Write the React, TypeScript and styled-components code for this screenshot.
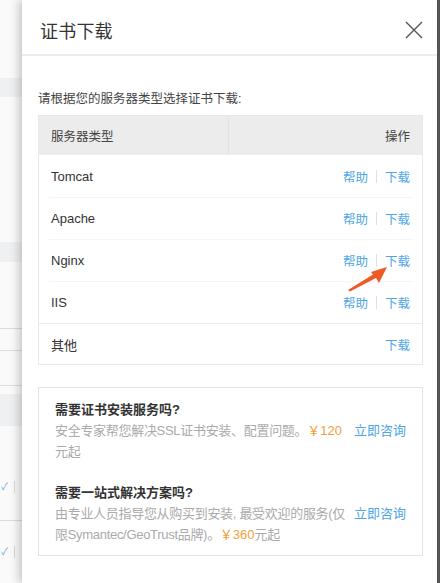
import React from "react";
import styled, { createGlobalStyle } from "styled-components";

const Global = createGlobalStyle`
  html, body { margin: 0; padding: 0; background: #fff; overflow: hidden; }
  body { font-family: "Liberation Sans", "Noto Sans CJK SC", sans-serif; color: #333; }
  * { box-sizing: border-box; }
`;

const Page = styled.div`
  position: relative;
  display: flex;
  width: 440px;
  height: 583px;
  overflow: hidden;
`;

const Backdrop = styled.div`
  width: 22px;
  flex: none;
  display: flex;
  flex-direction: column;
  background: #fbfbfb;
`;

const BgRow = styled.div<{ $h: number; $tone?: "band" | "plain" | "line" }>`
  position: relative;
  height: ${(p) => p.$h}px;
  flex: none;
  background: ${(p) => (p.$tone === "band" ? "#eef0f2" : "#fafafa")};
  border-bottom: ${(p) => (p.$tone === "line" ? "1px solid #dcdcdc" : "none")};
`;

const Check = styled.span<{ $at: number }>`
  position: absolute;
  left: 1px;
  top: ${(p) => p.$at}%;
  transform: translateY(-55%);
  color: #5aa8e6;
  font-size: 10px;
  line-height: 1;
`;

const Tick = styled.span<{ $at: number }>`
  position: absolute;
  left: 14px;
  top: ${(p) => p.$at}%;
  width: 1px;
  height: 12px;
  transform: translateY(-50%);
  background: #d8d8d8;
`;

const Dialog = styled.div`
  flex: 1;
  min-width: 0;
  position: relative;
  z-index: 1;
  background: #fff;
  box-shadow: -3px 0 9px rgba(0, 0, 0, 0.22);
  display: flex;
  flex-direction: column;
`;

const RightEdge = styled.div`
  width: 3px;
  flex: none;
  background: #585858;
`;

const Header = styled.div`
  height: 56px;
  padding: 6px 14px 0 18px;
  display: flex;
  align-items: center;
  justify-content: space-between;
  border-bottom: 2px solid #ececec;
`;

const Title = styled.h1`
  margin: 0;
  font-size: 18px;
  font-weight: 400;
  color: #333;
  letter-spacing: 0.2px;
`;

const Close = styled.button`
  border: 0;
  background: none;
  padding: 0;
  width: 18px;
  height: 18px;
  display: flex;
  align-items: center;
  justify-content: center;
  cursor: pointer;
`;

const Body = styled.div`
  padding: 33px 14px 0 16px;
  display: flex;
  flex-direction: column;
`;

const Intro = styled.p`
  margin: 0 0 6px;
  font-size: 12.5px;
  line-height: 20px;
  color: #444;
`;

const Table = styled.div`
  border: 1px solid #e8e8e8;
  display: flex;
  flex-direction: column;
`;

const HeadRow = styled.div`
  display: grid;
  grid-template-columns: 189px 1fr;
  height: 39px;
  background: #ececec;
  font-size: 12.5px;
  color: #444;
`;

const HeadCell = styled.div<{ $right?: boolean }>`
  display: flex;
  align-items: center;
  padding: 0 12px;
  justify-content: ${(p) => (p.$right ? "flex-end" : "flex-start")};
  border-left: ${(p) => (p.$right ? "1px solid #e2e2e2" : "none")};
`;

const Row = styled.div<{ $strong?: boolean; $last?: boolean; $first?: boolean }>`
  position: relative;
  display: flex;
  align-items: center;
  justify-content: space-between;
  height: ${(p) => (p.$last ? 41 : 42)}px;
  padding: 0 12px;
  font-size: 13px;
  color: #333;
  border-top: ${(p) => (p.$strong ? "1px solid #ececec" : "none")};
  &::before {
    content: "";
    display: ${(p) => (p.$strong || p.$first ? "none" : "block")};
    position: absolute;
    left: 10px;
    right: 8px;
    top: 0;
    height: 1px;
    background: #f5f5f5;
  }
`;

const Actions = styled.div`
  display: flex;
  align-items: center;
  gap: 8px;
`;

const Link = styled.a`
  color: #4ea5e6;
  font-size: 12.5px;
  text-decoration: none;
  cursor: pointer;
`;

const Sep = styled.span`
  width: 1px;
  height: 13px;
  background: #e0e0e0;
`;

const InfoBox = styled.div`
  margin-top: 22px;
  border: 1px solid #e3e3e3;
  padding: 11px 16px 10px 16px;
  display: flex;
  flex-direction: column;
  gap: 20px;
`;

const Service = styled.div`
  display: flex;
  flex-direction: column;
`;

const ServiceTitle = styled.div`
  font-size: 13px;
  font-weight: 700;
  line-height: 21px;
  color: #333;
`;

const ServiceLine = styled.div`
  display: flex;
  justify-content: space-between;
  align-items: flex-start;
  gap: 6px;
`;

const Desc = styled.div`
  flex: 1;
  min-width: 0;
  font-size: 13px;
  line-height: 21px;
  letter-spacing: -0.3px;
  color: #aaa;
  white-space: nowrap;
`;

const Price = styled.span`
  color: #f2a03c;
  letter-spacing: 0;
`;

const Consult = styled(Link)`
  flex: none;
  font-size: 13px;
  line-height: 21px;
  white-space: nowrap;
`;

const ArrowMark = styled.svg`
  position: absolute;
  left: 340px;
  top: 260px;
  width: 55px;
  height: 35px;
  z-index: 2;
`;

const servers = ["Tomcat", "Apache", "Nginx", "IIS"];

const bgRows: { h: number; tone?: "band" | "plain" | "line"; check?: number }[] = [
  { h: 78 },
  { h: 19, tone: "band" },
  { h: 145 },
  { h: 20, tone: "band" },
  { h: 67, tone: "line" },
  { h: 22, tone: "line" },
  { h: 35, tone: "line" },
  { h: 8 },
  { h: 32, tone: "band" },
  { h: 95, tone: "line", check: 65 },
  { h: 62, check: 50 },
];

export default function App() {
  return (
    <>
      <Global />
      <Page>
        <Backdrop>
          {bgRows.map((r, i) => (
            <BgRow key={i} $h={r.h} $tone={r.tone}>
              {r.check !== undefined && (
                <>
                  <Check $at={r.check}>✓</Check>
                  <Tick $at={r.check} />
                </>
              )}
            </BgRow>
          ))}
        </Backdrop>
        <Dialog>
          <Header>
            <Title>证书下载</Title>
            <Close aria-label="关闭">
              <svg width="18" height="18" viewBox="0 0 18 18">
                <path d="M1 1 L17 17 M17 1 L1 17" stroke="#555" strokeWidth="1.4" fill="none" />
              </svg>
            </Close>
          </Header>
          <Body>
            <Intro>请根据您的服务器类型选择证书下载:</Intro>
            <Table>
              <HeadRow>
                <HeadCell>服务器类型</HeadCell>
                <HeadCell $right>操作</HeadCell>
              </HeadRow>
              {servers.map((s, i) => (
                <Row key={s} $first={i === 0}>
                  <span>{s}</span>
                  <Actions>
                    <Link>帮助</Link>
                    <Sep />
                    <Link>下载</Link>
                  </Actions>
                </Row>
              ))}
              <Row $strong $last>
                <span>其他</span>
                <Actions>
                  <Link>下载</Link>
                </Actions>
              </Row>
            </Table>
            <InfoBox>
              <Service>
                <ServiceTitle>需要证书安装服务吗?</ServiceTitle>
                <ServiceLine>
                  <Desc>
                    安全专家帮您解决SSL证书安装、配置问题。<Price>￥120</Price>
                    <br />
                    元起
                  </Desc>
                  <Consult>立即咨询</Consult>
                </ServiceLine>
              </Service>
              <Service>
                <ServiceTitle>需要一站式解决方案吗?</ServiceTitle>
                <ServiceLine>
                  <Desc>
                    由专业人员指导您从购买到安装, 最受欢迎的服务(仅
                    <br />
                    限Symantec/GeoTrust品牌)。<Price>￥360</Price>元起
                  </Desc>
                  <Consult>立即咨询</Consult>
                </ServiceLine>
              </Service>
            </InfoBox>
          </Body>
        </Dialog>
        <RightEdge />
        <ArrowMark viewBox="0 0 55 35">
          <polygon
            points="8,30 33,14.5 31,12 47,7 39,23 36,18 10,31.5"
            fill="#ee5a24"
          />
        </ArrowMark>
      </Page>
    </>
  );
}
